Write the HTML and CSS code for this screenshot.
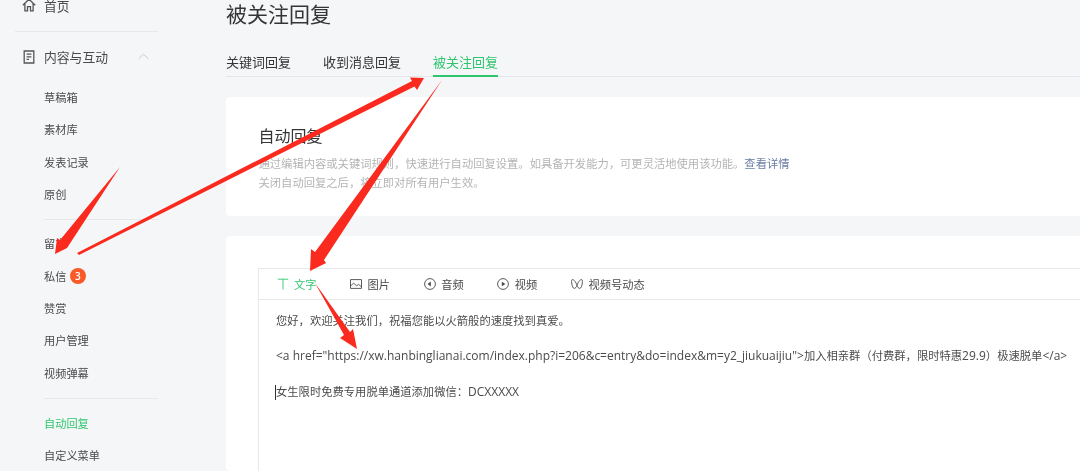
FILE: index.html
```html
<!DOCTYPE html>
<html lang="zh">
<head>
<meta charset="utf-8">
<title>被关注回复</title>
<link rel="stylesheet" href="styles.css">
</head>
<body>
<div class="app">
  <aside class="sidebar">
    <div class="home-row">
      <svg class="nav-icon" viewBox="0 0 14 14"><path d="M.8 7.2 7 1.2 13.2 7.2M2.9 5.4V12.8H5.5V8.6H8.5V12.8H11.1V5.4"/></svg>
      <span>首页</span>
    </div>
    <div class="group-head">
      <svg class="nav-icon" viewBox="0 0 14 14"><path d="M2.2 1H11.8V13H2.2ZM4.6 4.2H9.4M4.6 6.8H9.4M4.6 9.4H7"/></svg>
      <span>内容与互动</span>
      <svg class="chevron" viewBox="0 0 12 7"><path d="M.7 6 6 1 11.3 6"/></svg>
    </div>
    <ul class="nav-list nav-first">
      <li>草稿箱</li>
      <li>素材库</li>
      <li>发表记录</li>
      <li>原创</li>
    </ul>
    <ul class="nav-list nav-sep-a">
      <li>留言</li>
      <li>私信<span class="badge">3</span></li>
      <li>赞赏</li>
      <li>用户管理</li>
      <li>视频弹幕</li>
    </ul>
    <ul class="nav-list nav-sep-b">
      <li class="active">自动回复</li>
      <li>自定义菜单</li>
    </ul>
  </aside>
  <main class="main">
    <h1 class="title">被关注回复</h1>
    <nav class="tabs">
      <span class="tab">关键词回复</span>
      <span class="tab">收到消息回复</span>
      <span class="tab tab-active">被关注回复</span>
    </nav>
    <section class="card intro">
      <h2 class="intro-title">自动回复</h2>
      <p class="intro-text">通过编辑内容或关键词规则<span class="p">，</span>快速进行自动回复设置。如具备开发能力<span class="p">，</span>可更灵活地使用该功能。<a class="link">查看详情</a></p>
      <p class="intro-text">关闭自动回复之后<span class="p">，</span>将立即对所有用户生效。</p>
    </section>
    <section class="card editor-card">
      <div class="editor">
        <div class="toolbar">
          <span class="tool tool-active">
            <svg class="tool-icon" viewBox="0 0 12 12"><path d="M.8 1.2H11.2M6 1.2V11.5"/></svg>文字
          </span>
          <span class="tool">
            <svg class="tool-icon" viewBox="0 0 12 12"><path d="M.5 1.6H11.5V10.4H.5ZM.5 8 3.6 5.2 6.6 7.8 8.6 6.4 11.5 8.8"/></svg>图片
          </span>
          <span class="tool">
            <svg class="tool-icon" viewBox="0 0 12 12"><circle cx="6" cy="6" r="5.4"/><path class="fill" d="M3.6 6 6.8 3.6V8.4Z"/></svg>音频
          </span>
          <span class="tool">
            <svg class="tool-icon" viewBox="0 0 12 12"><circle cx="6" cy="6" r="5.4"/><path class="fill" d="M4.8 3.8 8.4 6 4.8 8.2Z"/></svg>视频
          </span>
          <span class="tool">
            <svg class="tool-icon" viewBox="0 0 12 12"><path d="M6 7.6C5 4 3 1.6 1.5 1.6 .5 1.6.5 3 .7 5 1 8 2 10.4 3.2 10.4 4.4 10.4 5.4 9 6 7.6 6.6 9 7.6 10.4 8.8 10.4 10 10.4 11 8 11.3 5 11.5 3 11.5 1.6 10.5 1.6 9 1.6 7 4 6 7.6Z"/></svg>视频号动态
          </span>
        </div>
        <div class="editor-body">
          <p class="line">您好<span class="p">，</span>欢迎关注我们<span class="p">，</span>祝福您能以火箭般的速度找到真爱。</p>
          <p class="line"><span class="lat">&lt;a href="https://xw.hanbinglianai.com/index.php?i=206&amp;c=entry&amp;do=index&amp;m=y2_jiukuaijiu"&gt;</span>加入相亲群<span class="p">（</span>付费群<span class="p">，</span>限时特惠<span class="lat">29.9</span><span class="p">）</span>极速脱单<span class="lat">&lt;/a&gt;</span></p>
          <p class="line"><span class="caret"></span>女生限时免费专用脱单通道添加微信<span class="p">：</span><span class="lat">DCXXXXX</span></p>
        </div>
      </div>
    </section>
  </main>
  <svg class="arrows" viewBox="0 0 1080 471">
    <path d="M120 167 67 248 55 254 57 238 60 240Z"/>
    <path d="M77 253 412 81 410 77.5 424 78 417 90 414.5 86.5 79 255Z"/>
    <path d="M442 80 324 260 326 263 310 271 311 249 315 252Z"/>
    <path d="M315 283 350 332 353 329 357 349 340 338 344 335Z"/>
  </svg>
</div>
</body>
</html>
```

FILE: styles.css
```css
* { box-sizing: border-box; }
html, body { margin: 0; height: 100%; }
body {
  background: #f5f6f8;
  color: #353535;
  font-family: "Open Sans", "Noto Sans CJK SC", sans-serif;
  overflow: hidden;
}
.app {
  position: relative;
  display: flex;
  width: 1080px;
  height: 471px;
  overflow: hidden;
  filter: blur(.45px);
}
.sidebar {
  flex: 0 0 226px;
  margin-top: -20px;
  font-size: 11.2px;
  color: #4a4a4a;
}
.home-row, .group-head {
  display: flex;
  align-items: center;
  font-size: 12.8px;
  margin-left: 15px;
  width: 143px;
  padding-left: 7px;
}
.home-row {
  height: 52px;
  padding-bottom: 1px;
  border-bottom: 1px solid #e7e8ea;
}
.group-head { height: 49px; }
.nav-icon {
  width: 14px;
  height: 14px;
  margin-right: 8px;
  fill: none;
  stroke: #555;
  stroke-width: 1.3;
}
.chevron {
  width: 11px;
  height: 7px;
  margin-left: 30px;
  fill: none;
  stroke: #c4c6c9;
  stroke-width: 1;
}
.nav-list {
  list-style: none;
  margin: 0 0 0 44px;
  padding: 0;
  width: 114px;
}
.nav-list li {
  display: flex;
  align-items: center;
  height: 32.33px;
}
.nav-sep-a, .nav-sep-b { border-top: 1px solid #e7e8ea; }
.nav-sep-a { margin-top: 9px; padding-top: 7px; }
.nav-sep-b { margin-top: 9px; padding-top: 8px; }
.active { color: #2fc56f; }
.badge {
  display: flex;
  align-items: center;
  justify-content: center;
  width: 16px;
  height: 16px;
  margin-left: 3.5px;
  border-radius: 50%;
  background: #fa5a28;
  color: #fff;
  font-size: 10px;
  font-weight: 600;
}
.main { flex: 1; min-width: 0; }
.title {
  margin: 0;
  font-size: 21px;
  font-weight: 400;
  line-height: 28px;
  color: #353535;
}
.tabs {
  display: flex;
  gap: 32px;
  height: 29px;
  margin-top: 20px;
  border-bottom: 1px solid #e4e6e9;
  font-size: 13px;
  line-height: 28px;
}
.tab { height: 29px; }
.tab-active {
  color: #2fc56f;
  border-bottom: 2px solid #2fc56f;
}
.card {
  background: #fff;
  border-radius: 4px 0 0 4px;
}
.intro {
  height: 119px;
  margin-top: 20px;
  padding: 28px 0 0 32.5px;
}
.intro-title {
  margin: 0 0 7px;
  font-size: 16px;
  font-weight: 400;
  line-height: 22px;
  color: #353535;
}
.intro-text {
  margin: 0;
  font-size: 11.3px;
  line-height: 18px;
  color: #b4b4b4;
}
.link { color: #6b7ea6; }
.p { font-family: "Noto Sans CJK TC", sans-serif; }
.editor-card {
  height: 235px;
  margin-top: 20px;
  padding: 32px 0 0 32px;
}
.editor {
  height: 203px;
  border: 1px solid #e7e8ea;
  border-right: 0;
  border-bottom: 0;
}
.toolbar {
  display: flex;
  align-items: center;
  gap: 33.6px;
  height: 31px;
  padding-left: 17.5px;
  border-bottom: 1px solid #e7e8ea;
  font-size: 11.25px;
  color: #4a4a4a;
}
.tool { display: flex; align-items: center; }
.tool-active { color: #2fc56f; }
.tool-icon {
  width: 12px;
  height: 12px;
  margin-right: 5.5px;
  fill: none;
  stroke: currentColor;
  stroke-width: .9;
}
.tool-icon .fill { fill: currentColor; stroke: none; }
.editor-body {
  padding: 2.5px 0 0 17px;
  font-size: 11.3px;
  white-space: nowrap;
  color: #4a4a4a;
}
.lat { font-size: 12px; }
.line {
  margin: 0;
  height: 35.5px;
  line-height: 35.5px;
}
.caret {
  display: inline-block;
  width: 1px;
  height: 15px;
  margin-left: -1px;
  background: #333;
  vertical-align: middle;
}
.arrows {
  position: absolute;
  inset: 0;
  width: 1080px;
  height: 471px;
  fill: #fb2a1e;
  pointer-events: none;
}
```
